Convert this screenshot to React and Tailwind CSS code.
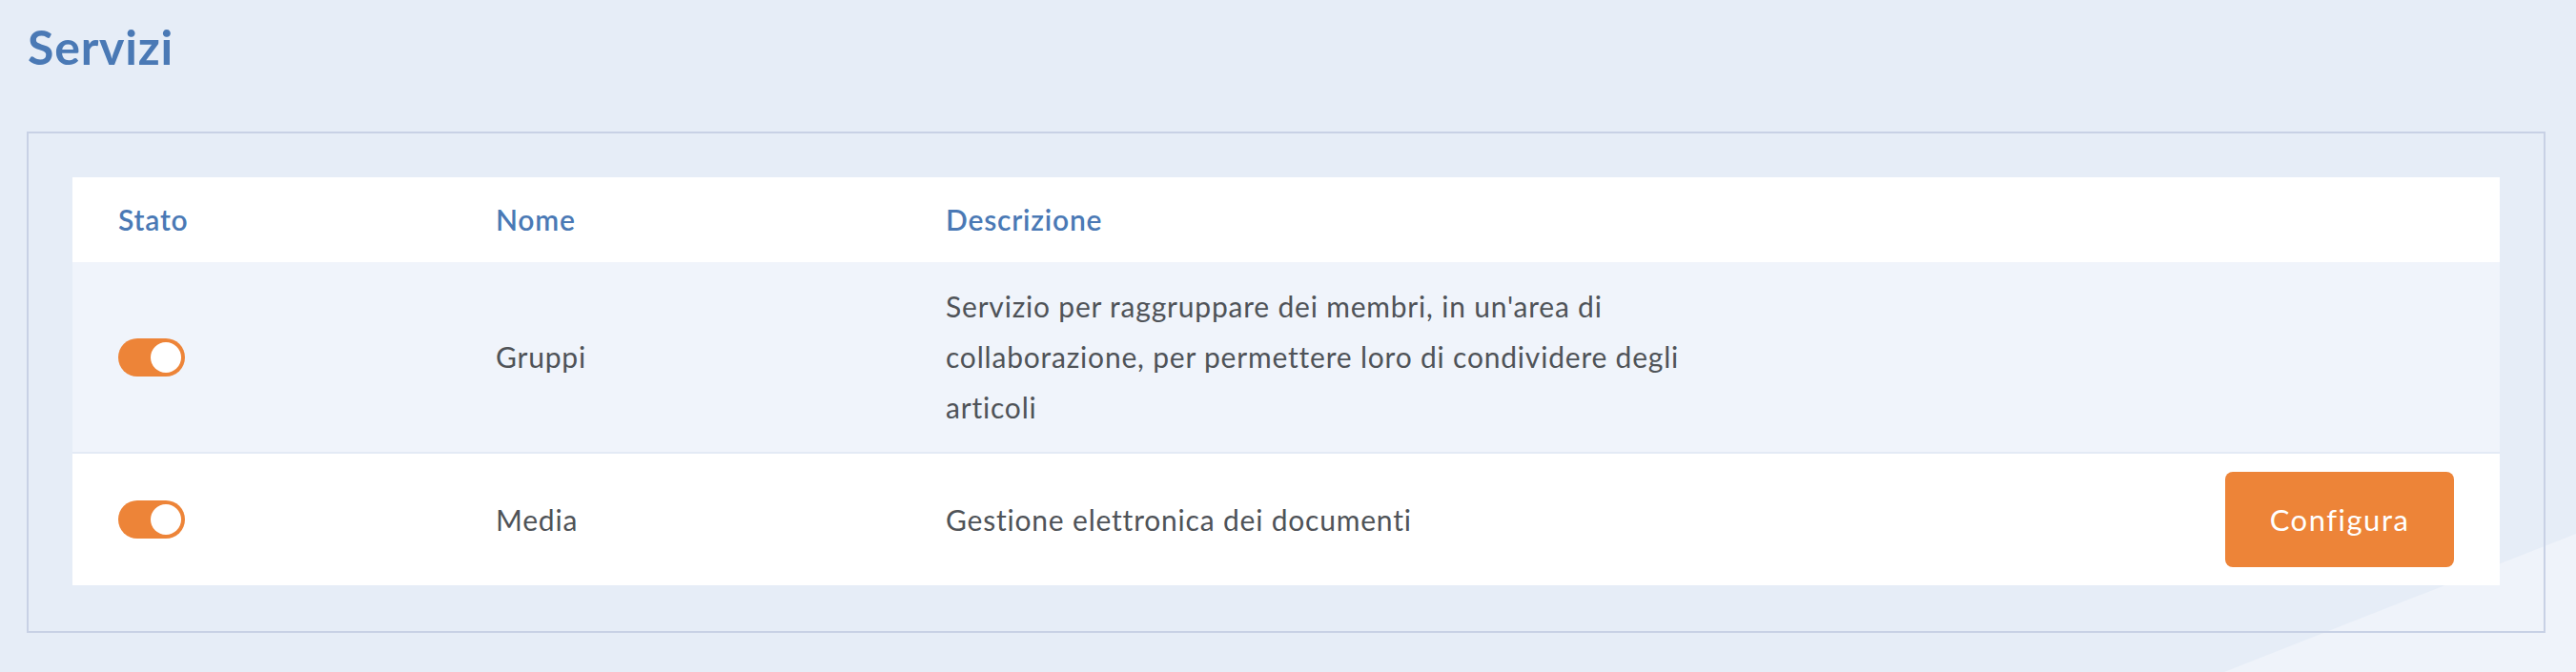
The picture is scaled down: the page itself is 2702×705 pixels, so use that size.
import { useState } from 'react'

const services = [
    {
        id: 'gruppi',
        name: 'Gruppi',
        description: "Servizio per raggruppare dei membri, in un'area di collaborazione, per permettere loro di condividere degli articoli",
        configurable: false,
    },
    {
        id: 'media',
        name: 'Media',
        description: 'Gestione elettronica dei documenti',
        configurable: true,
    },
]

function Toggle({ checked, onChange }) {
    return (
        <button
            type="button"
            onClick={onChange}
            className={`flex items-center w-[70px] h-[40px] rounded-full p-[4px] transition-colors ${checked ? 'bg-[#ed8438] justify-end' : 'bg-[#c8d1e5] justify-start'}`}
        >
            <span className="block w-[32px] h-[32px] rounded-full bg-white" />
        </button>
    )
}

export default function App() {
    const [enabled, setEnabled] = useState({ gruppi: true, media: true })

    const toggle = (id) => setEnabled(prev => ({ ...prev, [id]: !prev[id] }))

    return (
        <div className="relative min-h-[705px] overflow-hidden bg-[#e6edf7] font-['Lato',sans-serif]">
            {/* decorative light corner */}
            <svg className="absolute bottom-0 right-0" width="369" height="145" viewBox="0 0 369 145">
                <polygon points="0,145 369,0 369,145" fill="#eff3fa" />
            </svg>

            <div className="relative pt-[19px]">
                {/* Header */}
                <h1 className="pl-[29px] text-[50px] leading-[1.2] tracking-[0.8px] font-bold text-[#4a79b5]">Servizi</h1>

                {/* Card */}
                <div className="mt-[59px] ml-[28px] mr-[32px] border-2 border-[#c8d1e5] px-[46px] pt-[46px] pb-[48px]">
                    <div className="grid grid-cols-[396px_472px_1fr_auto] text-[30px] leading-[53px] tracking-[0.8px]">
                        {/* Table head */}
                        <div className="contents text-[#4a79b5] font-semibold">
                            <div className="bg-white pl-[48px] py-[18px]">Stato</div>
                            <div className="bg-white pl-[48px] py-[18px]">Nome</div>
                            <div className="bg-white pl-[48px] py-[18px]">Descrizione</div>
                            <div className="bg-white py-[18px]"></div>
                        </div>

                        {services.map((service, i) => {
                            const rowBg = i % 2 === 0 ? 'bg-[#f0f4fb]' : 'bg-white'
                            const sep = i < services.length - 1 ? 'border-b-2 border-[#e3eaf5]' : ''
                            return (
                                <div key={service.id} className="contents text-[#4f5358]">
                                    <div className={`${rowBg} ${sep} pl-[48px] py-[20px] flex items-center`}>
                                        <Toggle checked={enabled[service.id]} onChange={() => toggle(service.id)} />
                                    </div>
                                    <div className={`${rowBg} ${sep} pl-[48px] py-[20px] flex items-center`}>
                                        {service.name}
                                    </div>
                                    <div className={`${rowBg} ${sep} pl-[48px] py-[20px] flex items-center`}>
                                        <span className="max-w-[800px]">{service.description}</span>
                                    </div>
                                    <div className={`${rowBg} ${sep} pr-[48px] py-[19px] flex items-center justify-end`}>
                                        {service.configurable && (
                                            <button className="w-[240px] h-[100px] rounded-[8px] bg-[#ed8438] text-white text-[31px] tracking-[1.5px] hover:bg-[#e07528] transition-colors">
                                                Configura
                                            </button>
                                        )}
                                    </div>
                                </div>
                            )
                        })}
                    </div>
                </div>
            </div>
        </div>
    )
}
